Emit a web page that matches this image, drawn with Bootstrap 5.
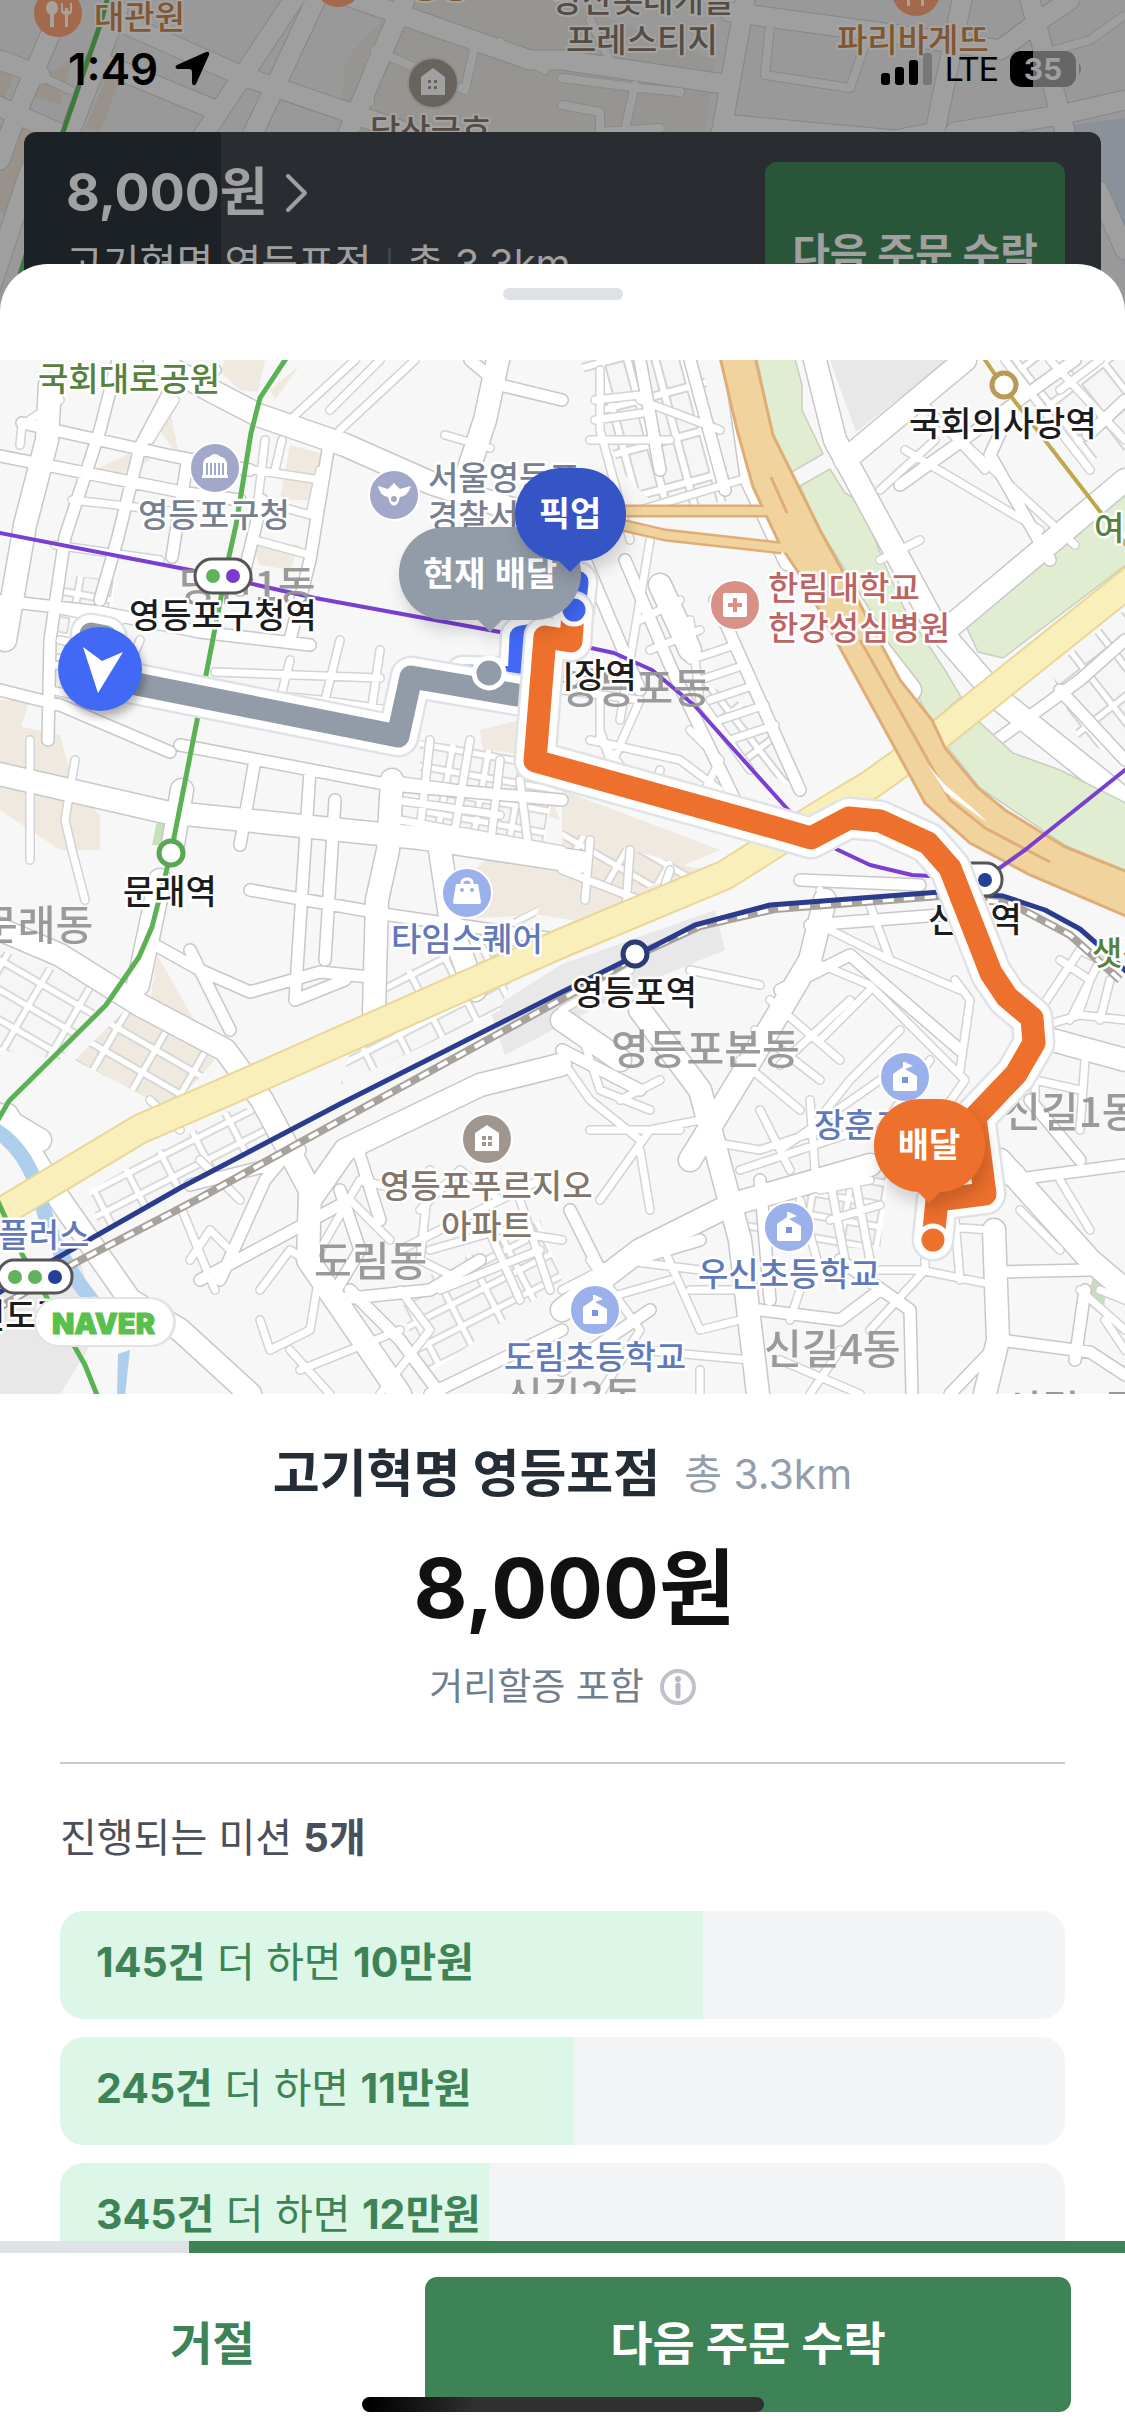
<!DOCTYPE html>
<html lang="ko">
<head>
<meta charset="utf-8">
<meta name="viewport" content="width=device-width, initial-scale=1">
<title>다음 주문</title>
<link href="https://cdn.jsdelivr.net/npm/bootstrap@5.3.0/dist/css/bootstrap.min.css" rel="stylesheet">
<style>
  :root { --brand: #3e8356; }
  body { font-family: Inter, "Noto Sans CJK KR", sans-serif; background: #fff; }
  svg { display: block; }
  .stage { height: 330px; background: #999; }
  .stage-map { inset: 0; width: 100%; height: 100%; }
  .status-row { height: 132px; padding: 42px 42px 36px 68px; color: #000; }
  .clock { font-size: 44px; font-weight: 600; line-height: 54px; }
  .carrier { font-family: Roboto, sans-serif; font-size: 34px; line-height: 54px; }
  .battery { width: 66px; height: 36px; border-radius: 11px; background: linear-gradient(90deg, #000 35%, #666 35%); color: #a0a0a0; font-size: 30px; font-weight: 700; line-height: 36px; }
  .offer { margin: 0 24px; height: 220px; border-radius: 12px; padding: 30px 36px 0 42px; background: linear-gradient(90deg, #1c2125 197px, #292c31 197px); color: #a0a0a0; }
  .offer-price { font-size: 52px; font-weight: 700; line-height: 62px; }
  .offer-sub { font-size: 40px; line-height: 56px; margin-top: 12px; }
  .offer-sep { width: 3px; height: 32px; background: #3d464e; }
  .offer-btn { width: 300px; height: 184px; border-radius: 12px; background: #295638; color: #a0a0a0; font-size: 41px; font-weight: 700; border: 0; }
  .sheet { margin-top: -66px; border-radius: 48px 48px 0 0; min-height: 0; }
  .grab-area { height: 96px; padding-top: 24px; }
  .grab { width: 120px; height: 12px; border-radius: 6px; background: #dee2e7; }
  .route-map { width: 100%; height: 1034px; }
  .summary { padding-top: 44px; }
  .shop { font-size: 51px; line-height: 72px; font-weight: 700; color: #242c36; }
  .total { font-size: 41px; line-height: 60px; color: #929eab; }
  .price { font-size: 83px; line-height: 96px; font-weight: 700; color: #111; margin-top: 30px; padding-left: 24px; }
  .extra { font-size: 37px; line-height: 54px; color: #717e8e; margin-top: 24px; }
  .missions { margin: 0 60px; border-top: 2px solid #c5cbd0; padding-top: 44px; }
  .missions-title { font-size: 40px; line-height: 60px; color: #49505a; margin-bottom: 43px; }
  .mission { height: 108px; border-radius: 24px; background: #f3f4f6; margin-bottom: 18px; flex-shrink: 0; }
  .mission-fill { inset: 0 auto 0 0; background: #dcf6e7; }
  .mission-text { padding: 21px 36px; font-size: 41px; line-height: 60px; color: var(--brand); }
  .timer { height: 12px; border-radius: 0; background: #dfe2e7; }
  .timer .progress-bar { background: var(--brand); }
  .actions { padding: 24px 54px 24px 0; }
  .act { height: 135px; border: 0; border-radius: 12px; font-size: 46px; font-weight: 700; padding-bottom: 4px; }
  .act-no { color: var(--brand); background: #fff; }
  .act-yes { color: #fff; background: var(--brand); flex: 0 0 646px; }
  .home-bar { bottom: 24px; left: 50%; width: 402px; height: 15px; margin-left: -201px; border-radius: 8px; background: linear-gradient(90deg, #000 2%, #303030 28%); }

  .edge { stroke: #c8c8c8; fill: none; stroke-linejoin: round; stroke-linecap: round; }
  .road { stroke: #fff; fill: none; stroke-linejoin: round; stroke-linecap: round; }
  .w1 { stroke-width: 25px; } .road.w1 { stroke-width: 22px; }
  .w2 { stroke-width: 14px; } .road.w2 { stroke-width: 11px; }
  .w3 { stroke-width: 10px; } .road.w3 { stroke-width: 7px; }
  .edge.w3 { stroke: #d3d3d3; }
  .lbl { font-family: "Noto Sans CJK KR", sans-serif; font-weight: 500; font-size: 33px; paint-order: stroke; stroke: #fff; stroke-width: 5px; stroke-linejoin: round; }
  .stn { font-size: 34px; fill: #1c1c1c; }
  .dong { font-size: 41px; fill: #969696; stroke: none; opacity: .95; }
  .pub { fill: #777f91; } .blu { fill: #6179bb; } .grn { fill: #56823c; } .brn { fill: #83756a; } .red { fill: #bd6462; }
  .pin-text { font-family: "Noto Sans CJK KR", sans-serif; font-weight: 700; font-size: 34px; fill: #fff; text-anchor: middle; }
  .naver { font-family: Inter, sans-serif; font-weight: 900; font-size: 29px; fill: #58c04d; stroke: #58c04d; stroke-width: 1px; }
  .line { fill: none; stroke-linejoin: round; }
  .rt { fill: none; stroke-linejoin: round; stroke-linecap: round; }
  .halo2 { stroke: #dfe3e8; stroke-width: 43px; } .halo1 { stroke: #fff; stroke-width: 38px; } .core { stroke-width: 23px; }
  .dark-lbl { stroke: #a5a4a2; stroke-width: 4px; }
</style>
<script src="https://cdn.jsdelivr.net/npm/bootstrap@5.3.0/dist/js/bootstrap.bundle.min.js"></script>
</head>
<body>
<div class="vh-100 d-flex flex-column overflow-hidden position-relative">

  <header class="stage position-relative overflow-hidden flex-shrink-0">
    <svg class="stage-map position-absolute" viewBox="0 0 1125 330" preserveAspectRatio="xMidYMin slice" aria-hidden="true">
      <rect width="1125" height="330" fill="#999"/>
      <path d="M345 60 400 0H560L715 60 705 132H340Z" fill="#979592"/>
      <path d="M0 66 14 73 5 98 0 95ZM30 80 72 62 60 105 28 95ZM85 128 110 70 118 85 100 132ZM0 160 15 118 45 132 20 218 0 212Z" fill="#98928a"/>
      <path d="M1073 125 1125 118V265L1098 190Z" fill="#8b919a"/>
      <defs>
        <path id="t1" d="M0 160 20 105 65 0M-20 98 75 140M70 132 118 10M105 15 240 75 400 130M200 140 300 -10M250 140 318 -5M345 140 405 0M95 60 215 110M330 -10 430 25 530 60 562 60 730 85M720 140 745 0M730 12 900 35 1000 50 1040 20 1070 0M735 125 895 140 935 132 962 0M955 132 1060 115 1125 100M1065 132 1030 0M1098 190 1125 250M0 60 40 75M-10 290 30 170"/>
        <path id="t2" d="M395 10 368 70 370 102M418 24 475 45 465 90 440 80M375 50 425 72M562 78 640 88 680 92M635 85 625 130M590 20 610 60M38 75 70 90M1020 60 1090 40 1125 15M562 105 600 112 600 132 660 128M770 25 765 75 850 88 870 30M500 42 515 55 545 70"/>
      </defs>
      <g fill="none" stroke-linejoin="round" stroke-linecap="round">
        <use href="#t2" stroke="#8b8a88" stroke-width="10"/><use href="#t1" stroke="#868686" stroke-width="21"/>
        <use href="#t2" stroke="#9f9f9f" stroke-width="8"/><use href="#t1" stroke="#9f9f9f" stroke-width="19"/>
      </g>
      <path d="M110 -10 100 25 63 132 20 275" stroke="#3f7a3c" stroke-width="5" fill="none"/>
      <circle cx="58" cy="13" r="24" fill="#a3694c"/>
      <g fill="#a8a29c"><ellipse cx="52" cy="8" rx="6" ry="7"/><path d="M50 8h4v19h-4ZM65 8h3v19h-3ZM61 3h2v8h7V3h2v8q0 4-5 4t-6-4Z"/></g>
      <circle cx="338" cy="-17" r="24" fill="#a3694c"/><circle cx="916" cy="-8" r="24" fill="#a3694c"/>
      <path d="M907 -3h3V6h-3ZM921 -3h3V6h-3Z" fill="#a8a29c"/>
      <circle cx="433" cy="83" r="25" fill="#68635d" stroke="#8f8c88" stroke-width="2"/>
      <path d="M421 95V77l12-9 12 9v18Z" fill="#a0a0a0"/><path d="M428 80h3v3h-3ZM434 80h3v3h-3ZM428 86h3v3h-3ZM434 86h3v3h-3Z" fill="#68635d"/>
      <g>
        <text class="lbl dark-lbl" x="94" y="29" fill="#7f5730">대관원</text>
        <text class="lbl dark-lbl" x="410" y="-2" fill="#7f5730">중앙</text>
        <text class="lbl dark-lbl" x="370" y="143" fill="#544c45">당산금호</text>
        <text class="lbl dark-lbl" x="552" y="12" fill="#544c45">당산롯데캐슬</text>
        <text class="lbl dark-lbl" x="566" y="52" fill="#544c45">프레스티지</text>
        <text class="lbl dark-lbl" x="837" y="52" fill="#7f5730">파리바게뜨</text>
      </g>
    </svg>
    <div class="position-relative">
      <div class="status-row d-flex align-items-center">
        <span class="clock">1:49</span>
        <svg class="ms-3" width="36" height="36" viewBox="0 0 36 36" aria-hidden="true"><path d="M32 1 3 14Q0 16 3 18H15Q18 18 18 21V32Q19 36 22 33L35 4Q36 0 32 1Z"/></svg>
        <svg class="ms-auto" width="52" height="36" viewBox="0 0 52 36" aria-hidden="true"><rect y="22" width="9" height="12" rx="3"/><rect x="14" y="16" width="9" height="18" rx="3"/><rect x="28" y="9" width="9" height="25" rx="3"/><rect x="42" y="2" width="9" height="32" rx="3" fill="#777"/></svg>
        <span class="carrier mx-2 px-1">LTE</span>
        <span class="battery text-center">35</span>
        <svg width="7" height="12" viewBox="0 0 7 12" aria-hidden="true"><path d="M3 0q4 6 0 12Z" fill="#707070"/></svg>
      </div>
      <div class="offer d-flex justify-content-between">
        <div>
          <div class="offer-price d-flex align-items-center gap-3">8,000원
            <svg width="24" height="40" viewBox="0 0 24 40" fill="none" stroke="#a0a0a0" stroke-width="4" stroke-linecap="round" stroke-linejoin="round" aria-hidden="true"><path d="M4 3 21 20 4 37"/></svg>
          </div>
          <div class="offer-sub d-flex align-items-center gap-3"><span>고기혁명 영등포점</span><i class="offer-sep"></i><span>총 3.3km</span></div>
        </div>
        <button class="offer-btn" type="button">다음 주문 수락</button>
      </div>
    </div>
  </header>

  <main class="sheet bg-white position-relative flex-fill overflow-hidden d-flex flex-column">
    <div class="grab-area flex-shrink-0"><div class="grab mx-auto"></div></div>

    <svg class="route-map flex-shrink-0" viewBox="0 360 1125 1034" preserveAspectRatio="xMidYMid slice" role="img" aria-label="배달 경로 지도">
      <defs>
        <pattern id="gB" width="27" height="46" patternUnits="userSpaceOnUse" patternTransform="rotate(-15)"><rect width="27" height="46" fill="#fff"/><rect x="4" y="4" width="19" height="38" fill="#f6f6f6" stroke="#c8c8c8" stroke-width="1.5"/></pattern>
        <pattern id="gC" width="38" height="24" patternUnits="userSpaceOnUse" patternTransform="rotate(-27)"><rect width="38" height="24" fill="#fff"/><rect x="3" y="3" width="31" height="17" fill="#f6f6f6" stroke="#cfcfcf" stroke-width="1.5"/></pattern>
        <pattern id="gD" width="44" height="26" patternUnits="userSpaceOnUse" patternTransform="rotate(30)"><rect width="44" height="26" fill="#fff"/><rect x="3" y="3" width="37" height="19" fill="#f6f6f6" stroke="#cfcfcf" stroke-width="1.5"/></pattern>
        <pattern id="gP" width="44" height="26" patternUnits="userSpaceOnUse" patternTransform="rotate(30)"><rect width="44" height="26" fill="#fff"/><rect x="3" y="3" width="37" height="19" fill="#f0e9df" stroke="#cfcfcf" stroke-width="1.5"/></pattern>
        <pattern id="gE" width="36" height="22" patternUnits="userSpaceOnUse" patternTransform="rotate(10)"><rect width="36" height="22" fill="#fff"/><rect x="3" y="3" width="29" height="15" fill="#f6f6f6" stroke="#cfcfcf" stroke-width="1.5"/></pattern>
        <pattern id="gF" width="46" height="34" patternUnits="userSpaceOnUse" patternTransform="rotate(52)"><rect width="46" height="34" fill="#fff"/><rect x="3" y="3" width="39" height="27" fill="#f6f6f6" stroke="#c8c8c8" stroke-width="1.5"/></pattern>

        <path id="r1" d="M155 360 210 390 258 415 345 445 431 483 562 525M50 385 47 440 25 525 5 640M500 350 485 420 465 480M-10 772 165 812 420 838 580 862M182 790 172 850M160 880 138 985M392 780 388 850 377 900 374 1012M-10 925 60 955 140 1005 225 1050 262 1100 310 1190 308 1260 400 1394M735 360 752 480 790 560M815 360 835 440 935 625 1000 700 1125 800M845 460 965 360M952 625 1125 480M840 600 910 690M7 1115 60 1200 130 1300 180 1330 250 1394M310 1200 345 1150 480 1085 560 1065M640 1010 700 1090 740 1240 758 1394M825 900 810 960 745 1070 690 1160M-10 1110 40 1140M562 1310 640 1250 730 1205 870 1165M562 1020 620 1060M1000 1160 1090 1260 1125 1290M994 1230 998 1340 985 1394M660 585 690 650M1045 1038 1125 1060M440 850 452 930 475 990"/>
        <path id="r2" d="M22 423 90 438 172 456 250 470M-5 455 86 473 187 493 240 500M-5 600 100 612 200 632 310 645M118 360 100 430 65 537 50 640 48 740M215 370 170 390 140 447 118 537 100 600M187 463 172 557M262 500 240 590M328 450 310 560 290 640M0 690 60 705 170 752M255 760 240 845M310 770 295 1000 345 980M180 745 390 785 562 800M250 890 390 915 562 940M335 800 325 960M470 360 500 385 562 400M640 360 660 470M690 360 725 490M585 560 640 690M625 560 672 670 735 800M900 485 1075 360M1050 560 990 455 1020 390M1088 435 1125 400M990 745 1080 680 1125 640M1060 690 1125 760M715 600 800 790M155 945 200 970 250 992 320 972 380 978M190 950 230 1030 M355 1140 380 1220M190 1185 270 1165 300 1150M220 1280 265 1180 290 1150M200 1280 340 1205M340 1190 360 1250 330 1300 430 1290 480 1260M350 1290 400 1340 440 1394M562 1050 640 1090 M780 990 850 955 960 1050M800 880 920 885M810 925 940 915M1085 1290 1075 1360M1000 1340 1090 1352 1125 1375M996 1272 1090 1270M1030 1100 1080 1160M1010 1180 1125 1165M950 1394 992 1350M840 1260 910 1310 912 1394M570 1210 600 1270 700 1240M562 1370 650 1310M760 1310 840 1320 880 1290M760 1180 770 1300M430 1394 562 1330"/>
        <path id="r3" d="M72 500 180 512M55 545 160 560M60 400 22 425 20 445M60 610 120 622M60 640 110 650M55 665 115 672M50 690 100 700M75 760 65 820 72 850 85 900M30 860 30 740M140 640 115 700M265 440 258 500 310 515 320 470M282 440 275 470M255 470 320 480M255 540 310 555M415 360 340 430M380 360 330 410M355 360 290 420M150 440 175 400M445 435 490 448M220 690 320 700 390 710M215 672 380 678M215 715 370 725M340 640 320 720M380 650 370 720M280 700 290 660M400 820 562 850M395 800 500 815M395 780 540 800M430 740 420 830M470 740 455 830M500 760 490 850M520 780 530 860M640 400 720 430M595 400 640 395M595 420 650 412M590 440 670 440M600 370 600 430 630 540M640 510 740 480M650 540 620 720M690 620 700 700 750 770M690 660 735 645M700 680 745 665M710 700 755 685M720 720 765 705M730 740 775 725M640 620 680 600M650 650 700 630M590 740 680 760 720 790M600 790 640 700M660 770 650 810M620 790 600 730M700 800 720 760 690 730M562 870 640 900M590 840 585 900M630 850 625 920M670 870 660 900M880 560 920 540M905 450 1040 530M950 430 1075 545M925 405 985 470M1005 360 1090 470M1050 360 1125 440M1060 390 1100 360M880 490 935 440M562 690 640 700M600 700 600 740 640 790M150 1100 180 1130M182 1210 215 1290M230 1250 210 1230 190 1260M240 1200 200 1160M260 1290 290 1250 320 1270 310 1330 270 1350 260 1320M350 1200 390 1240M320 1250 360 1180 400 1190M300 1370 400 1330M290 1350 330 1394M400 1290 430 1330 380 1394M430 1250 500 1230 562 1240M420 1210 460 1170 500 1200M430 1170 420 1260 460 1280M400 1250 540 1180M440 1290 540 1250M480 1210 520 1300M520 1200 550 1290M562 1010 630 970M562 1060 590 1100 640 1140M580 1030 600 1090 650 1110M620 1100 660 1080M590 1130 680 1130M600 1200 650 1130 700 1120M640 1150 650 1210M690 970 760 985M810 960 870 985 965 1080M770 1000 840 1060M755 1030 820 1080M740 1060 800 1110M870 990 820 1040M850 1000 780 1065M900 1030 850 1080 810 1130M880 1080 780 1150M930 1060 880 1130M965 1080 930 1130M760 1110 790 1170M700 1140 760 1150 820 1130M740 1170 860 1130M810 1100 815 1170M820 1190 870 1180M830 1220 880 1205M800 1200 820 1270M830 1180 845 1260M855 1180 870 1260M820 1270 920 1270 995 1285M925 1190 925 1270 870 1330M920 1225 990 1230M955 1220 960 1280M590 1260 640 1330 600 1394M562 1290 620 1260 700 1270M600 1300 670 1280M660 1240 700 1330 740 1320M690 1290 740 1290M640 1350 750 1360M700 1370 700 1394M780 1360 860 1394M810 1394 840 1350M790 1320 800 1290M1020 1210 1060 1250M1060 1180 1090 1230M1020 1170 1030 1200M1035 1100 1035 1080 1080 1090M1085 1060 1080 1130M1040 1010 1080 950 1100 960 1070 1020M1060 960 1090 980 1080 1010M1030 1030 1080 1015 1125 1020M1110 980 1100 1020M955 980 970 1000 960 1070M820 890 830 930 890 960 960 990M870 905 890 960M1080 1290 1125 1330M1100 1290 1125 1300M1105 1320 1125 1350"/>
      </defs>

      <rect y="360" width="1125" height="1034" fill="#f7f7f7"/>
      <path d="M225 360 265 360 258 392 240 390 220 372ZM300 365 275 400 270 390ZM160 430 170 410 180 460ZM290 445 328 455 310 500 280 500ZM250 540 300 545 290 570 260 565ZM95 470 140 448 150 460 130 472 95 475ZM0 700 30 700 20 730 0 740ZM0 722 60 735 75 790 100 815 100 850 60 850 0 810ZM480 730 520 720 560 820 490 800ZM562 790 720 850 650 880 562 880ZM460 880 500 850 600 862 730 870 600 925 540 915 440 920ZM157 955 200 1030 150 1003ZM265 440Z" fill="#f0e9df"/>
      <path d="M830 360H948L856 432ZM490 1010 560 965 715 910 725 950 640 985 562 1025 505 1055ZM0 1270 80 1260 100 1330 60 1394H0Z" fill="#e8e8e8"/>
      <path d="M580 360H700L735 500 660 510 620 470Z" fill="url(#gB)"/>
      <path d="M65 575 115 580 105 680 55 670ZM420 740 560 760 540 860 420 845Z" fill="url(#gE)"/>
      <path d="M370 990 540 905 500 1010 340 1085ZM90 1190 240 1105 290 1130 100 1235ZM400 1290 540 1220 562 1280 420 1380Z" fill="url(#gC)"/>
      <path d="M0 950 110 990 60 1060 0 1050Z" fill="url(#gD)"/>
      <path d="M75 1060 130 1005 215 1060 170 1110Z" fill="url(#gP)"/>
      <path d="M740 1190 890 1160 880 1250 750 1240Z" fill="url(#gE)"/>
      <path d="M1010 360H1125V450L1090 460ZM1050 670 1125 610V760L1080 740ZM700 680 770 720 800 790 740 760Z" fill="url(#gF)"/>
      <path d="M562 830 700 870 640 890 570 880Z" fill="url(#gP)"/>

      <g fill="#e0edd1" stroke="#c9cfc0" stroke-width="1.5">
        <path d="M757 359H795L802 385V410L823 454 792 472 773 435Z"/>
        <path d="M800 486 830 469 845 493 860 502 885 565 905 610 945 670 961 697 932 722 870 610 820 530Z"/>
        <path d="M960 613 1090 512 1110 495 1126 485V565L1003 658 978 652Z"/>
      </g>
      <path d="M158 815 168 818 160 845 152 845ZM1095 1270 1106 1290 1104 1308 1085 1306Z" fill="#c7dfbc"/>

      <use href="#r3" class="edge w3"/><use href="#r2" class="edge w2"/><use href="#r1" class="edge w1"/>
      <use href="#r3" class="road w3"/><use href="#r2" class="road w2"/><use href="#r1" class="road w1"/>
      <path d="M-8 1128Q30 1150 42 1205 58 1262 100 1310" fill="none" stroke="#aecfec" stroke-width="15"/><path d="M118 1354 130 1350 125 1396H117Z" fill="#aecfec"/>
      <path d="M942 740 975 718 1013 753 1060 770 1126 803V872L1065 845 980 788Z" fill="#e0edd1" stroke="#c9cfc0" stroke-width="1.5"/>

      <g class="line">
        <path d="M-10 1219 140 1129 230 1090 562 943 725 875 825 812 870 785 930 742 1135 578" stroke="#e8d797" stroke-width="31"/>
        <path d="M-10 1219 140 1129 230 1090 562 943 725 875 825 812 870 785 930 742 1135 578" stroke="#f9efbb" stroke-width="27"/>
        <path d="M600 511H775M600 520 665 535 782 548" stroke="#dfad78" stroke-width="13"/>
      </g>
      <path d="M720 357 737 430 753 487 780 545 800 575 896 750 925 803 970 843 1030 875 1128 917V872L1065 847 1005 810 978 788 945 748 932 720 900 680 842 570 820 530 773 435 755 357Z" fill="#f1d39e" stroke="#dfad78" stroke-width="3"/>
      <path d="M600 511H778M600 520 665 535 790 549" stroke="#f1d39e" stroke-width="8" fill="none"/>
      <path d="M860 640 925 755 950 800 985 828 1050 862M771 477 787 513" fill="none" stroke="#dfad78" stroke-width="3"/>
      <path d="M928 765 945 785 975 810 988 823 945 792Z" fill="#fff"/>

      <g class="line">
        <path d="M1120 980 1070 935 1010 903 940 896 775 909 700 926 650 949 562 999 290 1148 200 1198 75 1263 -5 1310" stroke="#a7a29b" stroke-width="8"/>
        <path d="M1120 980 1070 935 1010 903 940 896 775 909 700 926 650 949 562 999 290 1148 200 1198 75 1263 -5 1310" stroke="#fff" stroke-width="4" stroke-dasharray="11 10"/>
        <path d="M1130 975 1096 943 1080 929 1045 910 1003 896 940 892 770 905 695 925 635 956 562 992 340 1104 180 1188 50 1262 -5 1295" stroke="#2b3c8f" stroke-width="5"/>
        <path d="M287 357 260 398 251 433 236 525 228 561 205 680 171 853 152 927 139 957 106 1005 9 1101 -5 1125M-5 1195 23 1256 46 1296 85 1365 99 1400" stroke="#5bb254" stroke-width="5"/>
        <path d="M-5 532 190 570 315 598 500 632 591 648 614 653 652 670 695 706 790 812 836 849 870 865 912 875 984 879 1025 850 1130 766" stroke="#7a3fd1" stroke-width="4"/>
        <path d="M983 357 1003 386 1102 514 1126 545" stroke="#c1a64e" stroke-width="4"/>
      </g>

      <g>
        <text class="lbl dong" x="179" y="601">당산1동</text>
        <text class="lbl dong" x="560" y="703">영등포동</text>
        <text class="lbl dong" x="-20" y="940">문래동</text>
        <text class="lbl dong" x="611" y="1064">영등포본동</text>
        <text class="lbl dong" x="1003" y="1127">신길1동</text>
        <text class="lbl dong" x="314" y="1276">도림동</text>
        <text class="lbl dong" x="764" y="1364">신길4동</text>
        <text class="lbl dong" x="505" y="1412">신길3동</text>
        <text class="lbl dong" x="1004" y="1425">신길5동</text>
      </g>

      <g fill="#fff">
        <circle cx="171" cy="853" r="12" stroke="#5aa653" stroke-width="5"/>
        <circle cx="1004" cy="385" r="12" stroke="#bb9a57" stroke-width="5"/>
        <circle cx="635" cy="954" r="12" stroke="#2b3c74" stroke-width="5"/>
        <rect x="195" y="559" width="56" height="34" rx="17" stroke="#555" stroke-width="3"/>
        <rect x="-2" y="1260" width="74" height="33" rx="16" stroke="#555" stroke-width="3"/>
        <rect x="948" y="863" width="54" height="33" rx="16" stroke="#555" stroke-width="3"/>
      </g>
      <circle cx="213" cy="576" r="7" fill="#60b35c"/><circle cx="233" cy="576" r="7" fill="#7a3bd0"/>
      <circle cx="15" cy="1277" r="7" fill="#60b35c"/><circle cx="35" cy="1277" r="7" fill="#60b35c"/><circle cx="55" cy="1277" r="7" fill="#264096"/>
      <circle cx="985" cy="880" r="7" fill="#264096"/>

      <g stroke="#fff" stroke-width="2">
        <circle cx="215" cy="468" r="25" fill="#a1a8c9"/><circle cx="394" cy="495" r="25" fill="#a1a8c9"/>
        <circle cx="735" cy="605" r="25" fill="#d99087"/><circle cx="467" cy="893" r="25" fill="#9bb1eb"/>
        <circle cx="487" cy="1139" r="25" fill="#9f968f"/><circle cx="905" cy="1077" r="25" fill="#9bb1eb"/>
        <circle cx="789" cy="1227" r="25" fill="#9bb1eb"/><circle cx="595" cy="1310" r="25" fill="#9bb1eb"/>
      </g>
      <g fill="#fff">
        <path d="M203 463q2-6 6-6 6-6 12 0 4 0 6 6v12h1v3h-26v-3h1Z"/>
        <path d="M207 463v12M211 463v12M215 463v12M219 463v12M223 463v12" stroke="#a1a8c9" stroke-width="2"/>
        <path d="M378 486 388 489 391 486 394 483 397 486 400 489 411 486Q408 496 400 497L398 503Q394 508 390 503L388 497Q380 496 378 486Z"/><circle cx="394" cy="499" r="3" fill="#a1a8c9"/>
        <rect x="723" y="593" width="24" height="24" rx="2"/><path d="M733 598h4v5h5v4h-5v5h-4v-5h-5v-4h5Z" fill="#d99087"/>
        <path d="M456 884h22l3 18q0 2-2 2h-24q-2 0-2-2Z"/><path d="M462 886v-3q0-4 5-4t5 4v3" fill="none" stroke="#fff" stroke-width="3"/><circle cx="462" cy="890" r="2" fill="#9bb1eb"/><circle cx="472" cy="890" r="2" fill="#9bb1eb"/>
        <path d="M475 1151v-18l12-8 12 8v18Z"/><path d="M482 1136h4v4h-4ZM488 1136h4v4h-4ZM482 1142h4v4h-4ZM488 1142h4v4h-4Z" fill="#9f968f"/>
      </g>
      <g id="sch"><path d="M893 1089v-15l10-7v-5h2l8 4-8 3 12 7v13q0 2-2 2h-20q-2 0-2-2Z" fill="#fff"/><rect x="902" y="1077" width="6" height="6" fill="#7395e4"/></g>
      <use href="#sch" x="-116" y="150"/><use href="#sch" x="-310" y="233"/>

      <g>
        <text class="lbl grn" x="38" y="391">국회대로공원</text>
        <text class="lbl pub" x="138" y="527">영등포구청</text>
        <text class="lbl pub" x="428" y="490">서울영등포</text>
        <text class="lbl pub" x="428" y="528">경찰서</text>
        <text class="lbl red" x="768" y="600">한림대학교</text>
        <text class="lbl red" x="768" y="640">한강성심병원</text>
        <text class="lbl grn" x="1094" y="540">여의도</text>
        <text class="lbl grn" x="1092" y="965">샛강</text>
        <text class="lbl blu" x="391" y="951">타임스퀘어</text>
        <text class="lbl brn" x="380" y="1198">영등포푸르지오</text>
        <text class="lbl brn" x="441" y="1238">아파트</text>
        <text class="lbl blu" x="814" y="1137">장훈고등학교</text>
        <text class="lbl blu" x="698" y="1286">우신초등학교</text>
        <text class="lbl blu" x="504" y="1369">도림초등학교</text>
        <text class="lbl blu" x="-32" y="1247">홈플러스</text>
        <text class="lbl stn" x="129" y="628">영등포구청역</text>
        <text class="lbl stn" x="909" y="436">국회의사당역</text>
        <text class="lbl stn" x="449" y="688">영등포시장역</text>
        <text class="lbl stn" x="123" y="904">문래역</text>
        <text class="lbl stn" x="572" y="1005">영등포역</text>
        <text class="lbl stn" x="928" y="932">신길역</text>
        <text class="lbl stn" x="-26" y="1328">신도림역</text>
      </g>

      <path id="pb" class="rt" d="M574 610 577 582 560 578M464 676 519 678 521 637 552 632"/>
      <use href="#pb" class="rt halo2"/><use href="#pb" class="rt halo1"/><use href="#pb" class="rt core" stroke="#4169f6"/>
      <path id="pg" class="rt" d="M91 634 106 637 106 678 398 736 411 677 517 695"/>
      <use href="#pg" class="rt halo2"/><use href="#pg" class="rt halo1"/><use href="#pg" class="rt core" stroke="#929ca8"/>
      <circle cx="489" cy="673" r="15" fill="#929ca8" stroke="#fff" stroke-width="5"/>
      <path id="po" class="rt" d="M573 612 571 641 545 637 535 761 780 829 811 838 849 818 880 821 928 843 950 868 991 973 1007 997 1032 1018 1034 1043 1016 1074 975 1117 985 1194 937 1200 933 1240"/>
      <use href="#po" class="rt halo2"/><use href="#po" class="rt halo1"/><use href="#po" class="rt core" stroke="#ed702c"/>
      <circle cx="574" cy="610" r="14" fill="#4169f6" stroke="#fff" stroke-width="5"/>
      <circle cx="933" cy="1240" r="14" fill="#ed702c" stroke="#fff" stroke-width="5"/>

      <g>
        <g filter="drop-shadow(4px 10px 8px rgba(0,0,0,.16))"><rect x="399" y="527" width="182" height="93" rx="46" fill="#929ca8"/><path d="M476 618h28l-14 14Z" fill="#929ca8"/></g>
        <text class="pin-text" x="490" y="586">현재 배달</text>
        <g filter="drop-shadow(4px 10px 8px rgba(0,0,0,.16))"><rect x="515" y="468" width="111" height="93" rx="46" fill="#3554c6"/><path d="M556 558h28l-14 14Z" fill="#3554c6"/></g>
        <text class="pin-text" x="570" y="526">픽업</text>
        <g filter="drop-shadow(4px 10px 8px rgba(0,0,0,.16))"><rect x="874" y="1099" width="111" height="93" rx="46" fill="#ed702c"/><path d="M915 1189h28l-14 14Z" fill="#ed702c"/></g>
        <text class="pin-text" x="929" y="1157">배달</text>
        <g filter="drop-shadow(3px 6px 4px rgba(0,0,0,.3))"><circle cx="100" cy="669" r="42" fill="#4169f6"/></g>
        <path d="M83 647 102 661 123 652 98 693Z" fill="#fff"/>
      </g>
      <rect x="34" y="1297" width="142" height="50" rx="25" fill="#e3e3e3"/><rect x="36" y="1299" width="137" height="46" rx="23" fill="#fff"/>
      <text class="naver" x="52" y="1334">NAVER</text>
    </svg>

    <section class="summary text-center flex-shrink-0">
      <div class="d-flex justify-content-center align-items-center"><h1 class="shop m-0">고기혁명 영등포점</h1><span class="total ms-4">총 3.3km</span></div>
      <div class="price">8,000원</div>
      <div class="extra d-flex justify-content-center align-items-center">거리할증 포함
        <svg class="ms-3" width="36" height="36" viewBox="0 0 36 36" role="img" aria-label="안내"><circle cx="18" cy="18" r="16" fill="none" stroke="#bfc1ca" stroke-width="4"/><circle cx="18" cy="10" r="3" fill="#b6b8c3"/><path d="M18 16v11" stroke="#b6b8c3" stroke-width="5" stroke-linecap="round"/></svg>
      </div>
    </section>

    <section class="missions mt-5">
      <h2 class="missions-title fw-normal">진행되는 미션 <b>5개</b></h2>
      <div class="mission position-relative overflow-hidden"><div class="mission-fill position-absolute" style="width:64%"></div><div class="mission-text position-relative"><b>145건</b> 더 하면 <b>10만원</b></div></div>
      <div class="mission position-relative overflow-hidden"><div class="mission-fill position-absolute" style="width:51.1%"></div><div class="mission-text position-relative"><b>245건</b> 더 하면 <b>11만원</b></div></div>
      <div class="mission position-relative overflow-hidden"><div class="mission-fill position-absolute" style="width:42.7%"></div><div class="mission-text position-relative"><b>345건</b> 더 하면 <b>12만원</b></div></div>
    </section>
  </main>

  <footer class="flex-shrink-0 bg-white position-relative">
    <div class="timer progress justify-content-end"><div class="progress-bar" style="width:83.2%"></div></div>
    <div class="actions d-flex">
      <button class="act act-no flex-fill" type="button">거절</button>
      <button class="act act-yes" type="button">다음 주문 수락</button>
    </div>
    <div class="home-bar position-absolute"></div>
  </footer>
</div>
</body>
</html>
